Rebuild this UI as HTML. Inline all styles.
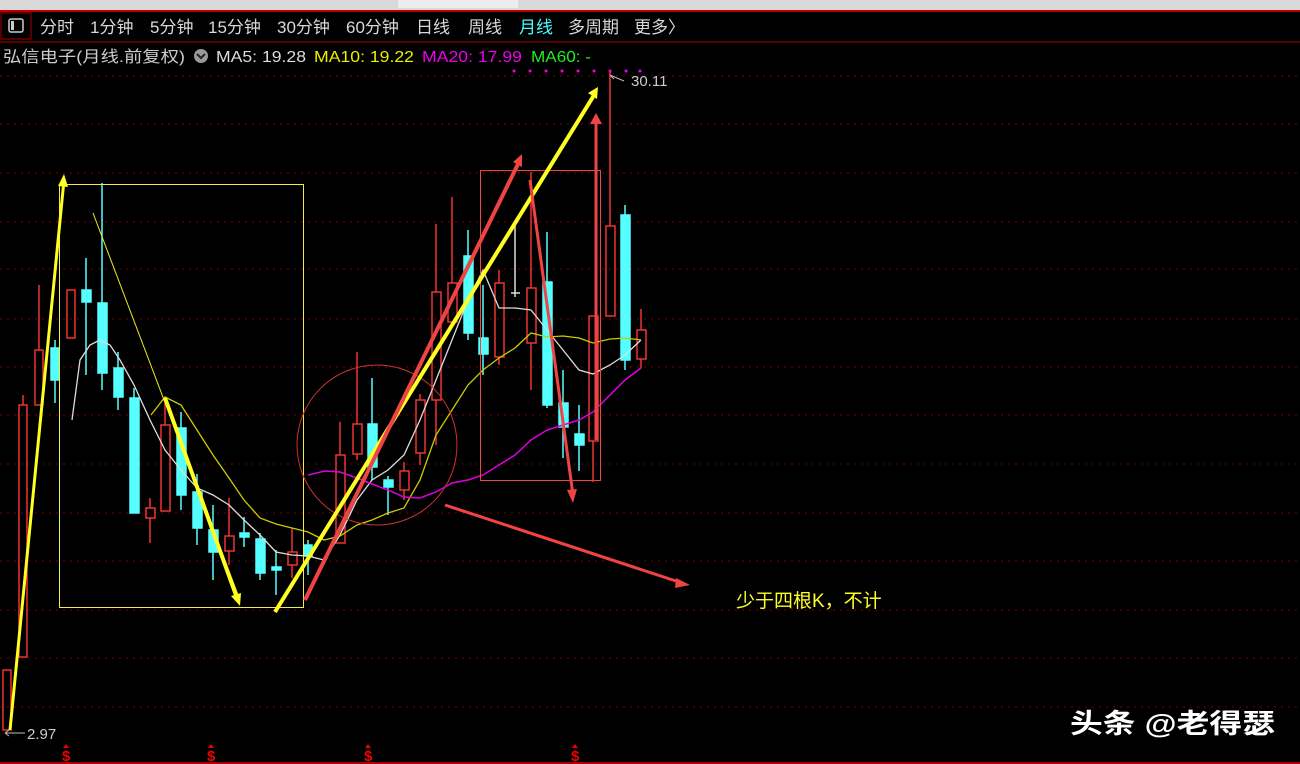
<!DOCTYPE html>
<html><head><meta charset="utf-8"><style>
body{margin:0;background:#000;width:1300px;height:764px;overflow:hidden;font-family:"Liberation Sans","Noto Sans CJK SC",sans-serif}
</style></head><body>
<svg width="1300" height="764" xmlns="http://www.w3.org/2000/svg" style="position:absolute;left:0;top:0">
<rect width="1300" height="764" fill="#000"/>
<rect x="0" y="0" width="1300" height="10" fill="#d8d8d8"/>
<rect x="398" y="0" width="120" height="8" fill="#ececec"/>
<line x1="0" y1="11" x2="1300" y2="11" stroke="#b00" stroke-width="2"/>
<rect x="1" y="13" width="30" height="26" fill="none" stroke="#a00"/>
<rect x="9" y="19" width="14" height="13" rx="2" fill="none" stroke="#ccc" stroke-width="1.5"/>
<rect x="11" y="21" width="3" height="9" fill="#ccc"/>
<g font-size="17" fill="#d8d8d8">
<text x="40" y="33">分时</text><text x="90" y="33">1分钟</text><text x="150" y="33">5分钟</text><text x="208" y="33">15分钟</text><text x="277" y="33">30分钟</text><text x="346" y="33">60分钟</text><text x="416" y="33">日线</text><text x="468" y="33">周线</text><text x="519" y="33" fill="#4ff">月线</text><text x="568" y="33">多周期</text><text x="634" y="33">更多〉</text>
</g>
<line x1="0" y1="42" x2="1300" y2="42" stroke="#a00"/>
<g font-size="16">
<text x="3" y="62" fill="#ccc" textLength="182" lengthAdjust="spacingAndGlyphs">弘信电子(月线.前复权)</text>
<circle cx="201" cy="56" r="7" fill="#999"/><path d="M197 54l4 4 4-4" stroke="#222" stroke-width="2" fill="none"/>
<text x="216" y="62" fill="#ddd" textLength="90" lengthAdjust="spacingAndGlyphs">MA5: 19.28</text>
<text x="314" y="62" fill="#ee0" textLength="100" lengthAdjust="spacingAndGlyphs">MA10: 19.22</text>
<text x="422" y="62" fill="#e0e" textLength="100" lengthAdjust="spacingAndGlyphs">MA20: 17.99</text>
<text x="531" y="62" fill="#2e2" textLength="60" lengthAdjust="spacingAndGlyphs">MA60: -</text>
</g>
<g stroke="#7a0000" stroke-dasharray="2 5" stroke-width="1">
<line x1="0" y1="76" x2="1300" y2="76"/><line x1="0" y1="124" x2="1300" y2="124"/><line x1="0" y1="173" x2="1300" y2="173"/><line x1="0" y1="222" x2="1300" y2="222"/><line x1="0" y1="269" x2="1300" y2="269"/><line x1="0" y1="319" x2="1300" y2="319"/><line x1="0" y1="367" x2="1300" y2="367"/><line x1="0" y1="415" x2="1300" y2="415"/><line x1="0" y1="464" x2="1300" y2="464"/><line x1="0" y1="513" x2="1300" y2="513"/><line x1="0" y1="561" x2="1300" y2="561"/><line x1="0" y1="610" x2="1300" y2="610"/><line x1="0" y1="658" x2="1300" y2="658"/><line x1="0" y1="707" x2="1300" y2="707"/>
</g>
<g fill="#e0e"><circle cx="514" cy="71" r="1.5"/><circle cx="530" cy="71" r="1.5"/><circle cx="546" cy="71" r="1.5"/><circle cx="562" cy="71" r="1.5"/><circle cx="578" cy="71" r="1.5"/><circle cx="594" cy="71" r="1.5"/><circle cx="610" cy="71" r="1.5"/><circle cx="626" cy="71" r="1.5"/><circle cx="640" cy="71" r="1.5"/></g>
<g stroke="#e33" stroke-width="1.5" fill="none">
<rect x="3" y="670" width="8" height="60"/>
<rect x="19" y="405" width="8" height="252"/><line x1="23" y1="395" x2="23" y2="405"/>
<rect x="35" y="350" width="8" height="55"/><line x1="39" y1="285" x2="39" y2="350"/>
<rect x="67" y="290" width="8" height="48"/>
<rect x="146" y="508" width="9" height="10"/><line x1="150" y1="498" x2="150" y2="508"/><line x1="150" y1="518" x2="150" y2="543"/>
<rect x="161" y="425" width="9" height="86"/><line x1="165" y1="398" x2="165" y2="425"/>
<rect x="225" y="536" width="9" height="15"/><line x1="229" y1="498" x2="229" y2="536"/><line x1="229" y1="551" x2="229" y2="565"/>
<rect x="288" y="552" width="9" height="13"/><line x1="292" y1="528" x2="292" y2="552"/><line x1="292" y1="565" x2="292" y2="578"/>
<rect x="336" y="455" width="9" height="88"/><line x1="340" y1="422" x2="340" y2="455"/>
<rect x="353" y="424" width="9" height="30"/><line x1="357" y1="352" x2="357" y2="424"/><line x1="357" y1="454" x2="357" y2="460"/>
<rect x="400" y="471" width="9" height="19"/><line x1="404" y1="462" x2="404" y2="471"/><line x1="404" y1="490" x2="404" y2="500"/>
<rect x="416" y="400" width="9" height="53"/><line x1="420" y1="394" x2="420" y2="400"/><line x1="420" y1="453" x2="420" y2="465"/>
<rect x="432" y="292" width="9" height="108"/><line x1="436" y1="224" x2="436" y2="292"/><line x1="436" y1="400" x2="436" y2="445"/>
<rect x="448" y="283" width="9" height="39"/><line x1="452" y1="197" x2="452" y2="283"/>
<rect x="495" y="283" width="9" height="74"/><line x1="499" y1="270" x2="499" y2="283"/><line x1="499" y1="357" x2="499" y2="365"/>
<rect x="527" y="288" width="9" height="55"/><line x1="531" y1="172" x2="531" y2="288"/><line x1="531" y1="343" x2="531" y2="390"/>
<rect x="589" y="316" width="9" height="125"/><line x1="593" y1="441" x2="593" y2="482"/>
<rect x="606" y="226" width="9" height="90"/><line x1="610" y1="72" x2="610" y2="226"/>
<rect x="637" y="330" width="9" height="29"/><line x1="641" y1="309" x2="641" y2="330"/><line x1="641" y1="359" x2="641" y2="368"/>
</g>
<g fill="#5ff" stroke="#5ff" stroke-width="1.5">
<rect x="51" y="348" width="8" height="32"/><line x1="55" y1="340" x2="55" y2="403"/>
<rect x="82" y="290" width="9" height="12"/><line x1="86" y1="258" x2="86" y2="375"/>
<rect x="98" y="303" width="9" height="70"/><line x1="102" y1="183" x2="102" y2="390"/>
<rect x="114" y="368" width="9" height="29"/><line x1="118" y1="352" x2="118" y2="410"/>
<rect x="130" y="398" width="9" height="115"/><line x1="134" y1="388" x2="134" y2="513"/>
<rect x="177" y="428" width="9" height="67"/><line x1="181" y1="412" x2="181" y2="510"/>
<rect x="193" y="492" width="9" height="36"/><line x1="197" y1="474" x2="197" y2="545"/>
<rect x="209" y="530" width="9" height="22"/><line x1="213" y1="505" x2="213" y2="580"/>
<rect x="240" y="533" width="9" height="4"/><line x1="244" y1="517" x2="244" y2="547"/>
<rect x="256" y="539" width="9" height="34"/><line x1="260" y1="533" x2="260" y2="580"/>
<rect x="272" y="567" width="9" height="3"/><line x1="276" y1="550" x2="276" y2="595"/>
<rect x="304" y="545" width="8" height="11"/><line x1="308" y1="540" x2="308" y2="575"/>
<rect x="368" y="424" width="9" height="43"/><line x1="372" y1="378" x2="372" y2="480"/>
<rect x="384" y="480" width="9" height="7"/><line x1="388" y1="476" x2="388" y2="515"/>
<rect x="464" y="256" width="9" height="77"/><line x1="468" y1="230" x2="468" y2="340"/>
<rect x="479" y="338" width="9" height="16"/><line x1="483" y1="285" x2="483" y2="375"/>
<rect x="543" y="282" width="9" height="123"/><line x1="547" y1="232" x2="547" y2="408"/>
<rect x="559" y="403" width="9" height="24"/><line x1="563" y1="370" x2="563" y2="458"/>
<rect x="575" y="434" width="9" height="11"/><line x1="579" y1="405" x2="579" y2="471"/>
<rect x="621" y="215" width="9" height="145"/><line x1="625" y1="205" x2="625" y2="370"/>
</g>
<line x1="511" y1="293" x2="520" y2="293" stroke="#ddd" stroke-width="1.5"/><line x1="515" y1="225" x2="515" y2="297" stroke="#ddd" stroke-width="1.5"/>
<polyline fill="none" stroke="#ddd" stroke-width="1.3" points="72,420 80,360 90,345 100,340 110,345 120,360 134,385 150,420 165,450 181,470 197,488 213,495 229,505 244,520 260,535 276,552 292,555 308,556 324,560 340,535 357,500 372,480 388,470 404,455 420,420 436,380 452,340 468,300 483,270 499,308 515,308 531,310 547,330 563,350 579,370 593,374 610,365 625,355 641,340"/>
<polyline fill="none" stroke="#cc0" stroke-width="1.3" points="151,415 165,397 181,405 197,430 213,455 229,478 244,500 260,518 276,524 292,528 308,532 324,540 340,536 357,525 372,520 388,513 404,508 420,480 436,435 452,410 468,385 483,370 499,358 515,348 531,333 547,337 563,336 579,338 593,343 610,339 625,338 641,340"/>
<polyline fill="none" stroke="#d0d" stroke-width="1.5" points="308,475 325,471 340,472 357,478 372,484 388,490 404,497 420,498 436,492 452,483 468,480 483,475 499,465 515,455 531,440 547,430 563,425 579,420 593,412 610,395 625,380 641,368"/>
<rect x="59.5" y="184.5" width="244" height="423" fill="none" stroke="#ee4" stroke-width="1"/>
<rect x="480.5" y="170.5" width="120" height="310" fill="none" stroke="#e44" stroke-width="1"/>
<circle cx="377" cy="445" r="80" fill="none" stroke="#c33" stroke-width="1"/>
<line x1="10" y1="730" x2="64" y2="180" stroke="#ff2" stroke-width="3"/><path d="M58 186l6-12 4 13z" fill="#ff2"/>
<line x1="93" y1="213" x2="240" y2="600" stroke="#ee2" stroke-width="1"/>
<line x1="165" y1="398" x2="237" y2="598" stroke="#ff2" stroke-width="4"/><path d="M231 596l9 10 1-13z" fill="#ff2"/>
<line x1="275" y1="612" x2="596" y2="92" stroke="#ff2" stroke-width="4"/><path d="M588 93l10-6-1 12z" fill="#ff2"/>
<line x1="305" y1="600" x2="519" y2="162" stroke="#e44" stroke-width="4"/><path d="M513 162l9-8 0 13z" fill="#e44"/>
<line x1="530" y1="180" x2="573" y2="495" stroke="#e44" stroke-width="3"/><path d="M567 490l6 13 4-14z" fill="#e44"/>
<line x1="596" y1="440" x2="596" y2="122" stroke="#e44" stroke-width="3"/><path d="M590 124l6-11 6 11z" fill="#e44"/>
<line x1="445" y1="505" x2="682" y2="583" stroke="#e44" stroke-width="3"/><path d="M676 578l14 7-15 3z" fill="#e44"/>
<path d="M610 75l14 6M610 75l4 4" stroke="#bbb" stroke-width="1" fill="none"/>
<text x="631" y="86" font-size="15" fill="#ccc">30.11</text>
<path d="M5 733h20M5 733l4-3M5 733l4 3" stroke="#bbb" stroke-width="1" fill="none"/>
<text x="27" y="739" font-size="15" fill="#ccc">2.97</text>
<text x="736" y="607" font-size="19" fill="#ff2">少于四根K，不计</text>
<text x="1070" y="733" font-size="27" font-weight="bold" fill="#fff" textLength="205" lengthAdjust="spacingAndGlyphs">头条 @老得瑟</text>
<g fill="#e00" font-size="15" font-weight="bold"><text x="62" y="761">$</text><text x="207" y="761">$</text><text x="364" y="761">$</text><text x="571" y="761">$</text></g>
<g fill="#e00"><path d="M63 748l3-4 3 4z"/><path d="M208 748l3-4 3 4z"/><path d="M365 748l3-4 3 4z"/><path d="M572 748l3-4 3 4z"/></g>
<line x1="0" y1="763" x2="1300" y2="763" stroke="#a00" stroke-width="2"/>
</svg>
</body></html>
